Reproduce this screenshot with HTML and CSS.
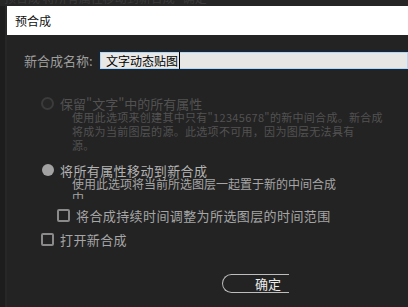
FILE: index.html
```html
<!DOCTYPE html>
<html lang="zh-CN">

<head>
    <meta charset="UTF-8">
    <meta name="viewport" content="width=device-width, initial-scale=1.0">
    <title>预合成</title>
    <link rel="stylesheet" href="styles.css">
</head>

<body>
    <div class="top-strip">
        <span class="ghost-text">预合成 将所有属性移动到新合成 &nbsp; 确定</span>
    </div>
    <div class="frame">
        <div class="edge"></div>
        <div class="dialog">
            <div class="title-bar">预合成</div>

            <div class="name-row">
                <span class="name-label">新合成名称:</span>
                <div class="name-input"><span class="caret">文字动态贴图</span></div>
            </div>

            <div class="options">
                <div class="option disabled">
                    <div class="option-head">
                        <span class="radio"></span>
                        <span>保留"文字"中的所有属性</span>
                    </div>
                    <div class="option-desc small">
                        使用此选项来创建其中只有"12345678"的新中间合成。新合成<br>
                        将成为当前图层的源。此选项不可用，因为图层无法具有<br>
                        源。
                    </div>
                </div>

                <div class="option selected">
                    <div class="option-head">
                        <span class="radio"></span>
                        <span>将所有属性移动到新合成</span>
                    </div>
                    <div class="option-desc clipped">
                        使用此选项将当前所选图层一起置于新的中间合成<br>
                        中。
                    </div>
                </div>

                <div class="check-row indent">
                    <span class="checkbox"></span>
                    <span>将合成持续时间调整为所选图层的时间范围</span>
                </div>
                <div class="check-row">
                    <span class="checkbox"></span>
                    <span>打开新合成</span>
                </div>

                <div class="button-row">
                    <button type="button" class="ok-button">确定</button>
                </div>
            </div>
        </div>
    </div>
</body>

</html>
```

FILE: styles.css
```css
body {
    margin: 0;
    padding: 0;
    background-color: #232323;
    font-family: "Noto Sans CJK SC", "Noto Sans", sans-serif;
    overflow: hidden;
}

.top-strip {
    height: 6px;
    background-color: #262626;
    overflow: hidden;
    padding-left: 4px;
}

.ghost-text {
    display: block;
    font-size: 12px;
    line-height: 12px;
    margin-top: -8px;
    color: #3a3a3a;
    white-space: nowrap;
}

.frame {
    display: flex;
    height: 301px;
}

.edge {
    width: 5px;
    background-color: #1d1d1d;
    border-right: 2px solid #272727;
}

.dialog {
    flex: 1;
    display: flex;
    flex-direction: column;
    overflow: hidden;
}

.title-bar {
    height: 29px;
    line-height: 29px;
    background-color: #fff;
    color: #111;
    font-size: 12px;
    padding-left: 8px;
}

.name-row {
    display: flex;
    align-items: center;
    margin-top: 15px;
    padding-left: 17px;
    height: 21px;
}

.name-label {
    width: 75px;
    font-size: 13px;
    color: #9d9d9d;
    white-space: nowrap;
}

.name-input {
    flex: 1;
    height: 17px;
    border: 1px solid #0d2a46;
    border-right: none;
    box-shadow: inset 0 0 0 1px #b9d5ec;
    background-color: #e7e7e5;
    padding-left: 6px;
    font-size: 12px;
    line-height: 17px;
    color: #000;
}

.caret {
    border-right: 1px solid #000;
    padding-right: 1px;
}

.options {
    padding-left: 34px;
    margin-top: 25px;
}

.option-head {
    display: flex;
    align-items: center;
    height: 14px;
    font-size: 13px;
    white-space: nowrap;
}

.radio {
    width: 13px;
    height: 13px;
    border-radius: 50%;
    box-sizing: border-box;
    margin-right: 6px;
}

.disabled {
    color: #525252;
}

.disabled .radio {
    border: 2px solid #3b3b3b;
    background-color: #262626;
}

.selected {
    margin-top: 11px;
    color: #b3b3b3;
}

.selected .option-head {
    letter-spacing: 0.4px;
}

.selected .radio {
    width: 12px;
    height: 12px;
    margin-left: 1px;
    margin-right: 6px;
    background-color: #a2a2a2;
}

.option-desc {
    margin-left: 31px;
    line-height: 14px;
    white-space: nowrap;
}

.option-desc.small {
    font-size: 11px;
    letter-spacing: 0.3px;
}

.option-desc.clipped {
    font-size: 12px;
    height: 22px;
    overflow: hidden;
    color: #a6a6a6;
}

.check-row {
    display: flex;
    align-items: center;
    height: 14px;
    margin-top: 9px;
    font-size: 13px;
    letter-spacing: 0.4px;
    color: #a6a6a6;
    white-space: nowrap;
}

.check-row + .check-row {
    margin-top: 10px;
}

.check-row.indent {
    padding-left: 16px;
}

.checkbox {
    width: 13px;
    height: 13px;
    box-sizing: border-box;
    border: 2px solid #8a8a8a;
    border-radius: 2px;
    margin-right: 6px;
}

.button-row {
    margin-top: 24px;
    padding-left: 181px;
}

.ok-button {
    width: 67px;
    height: 19px;
    padding: 0 0 0 32px;
    text-align: left;
    font-family: inherit;
    font-size: 13px;
    line-height: 17px;
    color: #ececec;
    background-color: transparent;
    border: 1px solid #bdbdbd;
    border-right: none;
    border-radius: 10px 0 0 10px;
    cursor: pointer;
}
```
